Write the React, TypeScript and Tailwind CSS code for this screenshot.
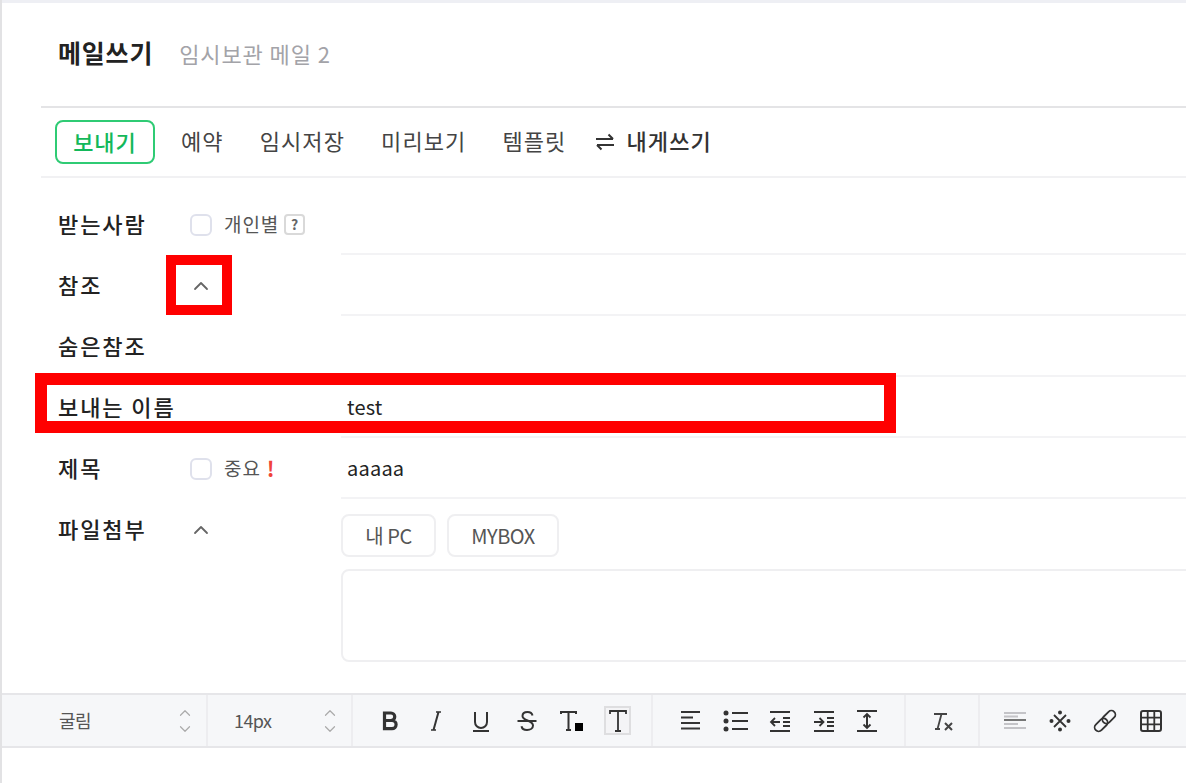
import type { ReactNode } from 'react'
import { ChevronUp, ChevronDown } from 'lucide-react'

const FONT = "font-['Noto_Sans_CJK_KR','Noto_Sans',sans-serif]"

function Row({ label, left, children }: { label: string; left?: ReactNode; children?: ReactNode }) {
    return (
        <div className="flex h-[61px]">
            <div className="w-[339px] flex items-center pl-[56px]">
                <span className="w-[132px] pb-[3px] text-[22px] font-medium text-[#222] tracking-[1.9px] whitespace-nowrap">{label}</span>
                {left}
            </div>
            <div className="flex-1 flex items-center border-b-2 border-[#f3f3f5] pl-[6px] text-[20px] text-[#222] tracking-[0.2px]">
                {children}
            </div>
        </div>
    )
}

function Check({ label }: { label: string }) {
    return (
        <span className="flex items-center gap-[12px]">
            <span className="w-[22px] h-[22px] rounded-[6px] border-2 border-[#dfe1ec] bg-white"></span>
            <span className="pb-[1px] text-[19px] text-[#555] tracking-[0.9px]">{label}</span>
        </span>
    )
}

function Ico({ children }: { children: ReactNode }) {
    return (
        <svg width="28" height="28" viewBox="0 0 28 28" fill="none" stroke="#333" strokeWidth="2">
            {children}
        </svg>
    )
}

function ToolBtn({ children, w }: { children: ReactNode; w: string }) {
    return <span className={`${w} flex items-center justify-center`}>{children}</span>
}

function Select({ label, className }: { label: string; className: string }) {
    return (
        <div className={`${className} flex items-center border-r-2 border-[#ededf0]`}>
            <span className="flex-1 text-[18px] text-[#555] tracking-[-0.6px]">{label}</span>
            <span className="flex flex-col items-center text-[#aaa]">
                <ChevronUp size={18} strokeWidth={1.6} className="-mb-[1px]" />
                <ChevronDown size={18} strokeWidth={1.6} className="-mt-[1px]" />
            </span>
        </div>
    )
}

export default function App() {
    return (
        <div className={`${FONT} relative h-[783px] w-full overflow-hidden bg-white border-l-2 border-[#e2e2e4]`}>
            <div className="h-[3px] bg-[#eeeff4]"></div>

            <div className="h-[103px] flex items-center pl-[56px] pb-[3px]">
                <h1 className="text-[25px] font-bold text-[#222] tracking-[0.8px]">메일쓰기</h1>
                <span className="ml-[26px] text-[22px] text-[#a3a3a8] tracking-[0.9px]">임시보관 메일 2</span>
            </div>

            <div className="ml-[39px] border-t-2 border-[#e4e4e6] border-b-2 border-b-[#f1f1f3] h-[72px] flex items-center pl-[14px]">
                <button className="w-[100px] h-[44px] rounded-[8px] border-2 border-[#2fcb74] pb-[2px] text-[22px] font-medium text-[#13b85a] tracking-[1px]">보내기</button>
                <div className="flex items-center pb-[3px] text-[22px] text-[#444] tracking-[1.1px]">
                    <span className="ml-[26px]">예약</span>
                    <span className="ml-[36px]">임시저장</span>
                    <span className="ml-[36px]">미리보기</span>
                    <span className="ml-[36px]">템플릿</span>
                </div>
                <span className="ml-[30px] flex items-center gap-[12px] text-[22px] font-medium text-[#333] tracking-[1.1px]">
                    <svg width="18" height="18" viewBox="0 0 18 18" fill="none" stroke="#333" strokeWidth="2">
                        <path d="M0 6h17M12.500 1.500 17 6M18 12H1M5.500 16.500 1 12" />
                    </svg>
                    <span className="pb-[3px]">내게쓰기</span>
                </span>
            </div>

            <div className="mt-[16px]">
                <Row
                    label="받는사람"
                    left={
                        <span className="flex items-center gap-[5px]">
                            <Check label="개인별" />
                            <span className="w-[21px] h-[21px] rounded-[4px] border-2 border-[#d9d9d9] text-[14px] font-bold text-[#666] flex items-center justify-center">?</span>
                        </span>
                    }
                />
                <Row label="참조" left={<ChevronUp size={24} strokeWidth={1.8} className="text-[#666] -ml-[1px]" />} />
                <Row label="숨은참조" />
                <Row label="보내는 이름">test</Row>
                <Row
                    label="제목"
                    left={
                        <span className="flex items-center gap-[6px]">
                            <Check label="중요" />
                            <span className="text-[21px] font-bold text-[#f0433a] leading-none">!</span>
                        </span>
                    }
                >
                    aaaaa
                </Row>
                <div className="flex h-[194px]">
                    <div className="w-[339px] flex items-start pl-[56px] pt-[13px]">
                        <span className="w-[132px] text-[22px] font-medium text-[#222] tracking-[1.9px]">파일첨부</span>
                        <ChevronUp size={24} strokeWidth={1.8} className="text-[#666] -ml-[1px] mt-[6px]" />
                    </div>
                    <div className="flex-1 pt-[15px]">
                        <div className="flex gap-[11px]">
                            <button className="w-[95px] h-[43px] rounded-[8px] border-2 border-[#efeff1] text-[20px] text-[#555] tracking-[-0.5px]">내 PC</button>
                            <button className="w-[112px] h-[43px] rounded-[8px] border-2 border-[#efeff1] text-[20px] text-[#555] tracking-[-0.5px]">MYBOX</button>
                        </div>
                        <div className="mt-[12px] h-[93px] -mr-[10px] rounded-[8px] border-2 border-[#efeff1]"></div>
                    </div>
                </div>
            </div>

            <div className="h-[55px] flex bg-[#f6f7f9] border-y-2 border-[#e6e6e9]">
                <Select label="굴림" className="w-[206px] pl-[57px] pr-[12px]" />
                <Select label="14px" className="w-[145px] pl-[26px] pr-[12px]" />

                <div className="w-[300px] flex items-center pl-[14px] border-r-2 border-[#ededf0]">
                    <ToolBtn w="w-[46px]">
                        <Ico>
                            <path strokeWidth="3.200" d="M8.500 6h6.500a3.700 3.700 0 0 1 0 7.500H8.500zM8.500 13.500h7.500a4.100 4.100 0 0 1 0 8.200H8.500z" />
                        </Ico>
                    </ToolBtn>
                    <ToolBtn w="w-[45px]">
                        <Ico><path d="M16.500 5 11.500 23" /><path strokeWidth="1.600" d="M14 5h5M9 23h5" /></Ico>
                    </ToolBtn>
                    <ToolBtn w="w-[46px]">
                        <Ico><path d="M8 5v10a6 6 0 0 0 12 0V5" /><path d="M6 24h16" /></Ico>
                    </ToolBtn>
                    <ToolBtn w="w-[46px]">
                        <Ico><path d="M19.500 8.500C19 6 17 5 14.500 5 11.500 5 9.500 6.500 9.500 9c0 5 10.500 4 10.500 9.500 0 2.700-2.500 4.500-6 4.500-3 0-5-1.300-5.500-3.800" /><path d="M4.500 14h19" /></Ico>
                    </ToolBtn>
                    <ToolBtn w="w-[46px]">
                        <Ico>
                            <path d="M2 7V5h15v2M9.500 5v18M7 23h5" />
                            <rect x="16" y="16" width="8" height="8" fill="#000" stroke="none" />
                        </Ico>
                    </ToolBtn>
                    <span className="ml-[8px] w-[27px] h-[29px] flex items-center justify-center border-2 border-[#dedee0] bg-[#f4f4f6]">
                        <svg width="20" height="24" viewBox="0 0 20 24" fill="none" stroke="#333" strokeWidth="1.800">
                            <path d="M2 5V2h16v3M10 2v20M7 22h6" />
                        </svg>
                    </span>
                </div>

                <div className="w-[253px] flex items-center pl-[15px] border-r-2 border-[#ededf0]">
                    <ToolBtn w="w-[45px]">
                        <Ico><path d="M4 5h19M4 10.500h12M4 16h19M4 21.500h19" /></Ico>
                    </ToolBtn>
                    <ToolBtn w="w-[45px]">
                        <Ico>
                            <path d="M10 6h16M10 14h16M10 22h16" />
                            <circle cx="4" cy="6" r="2.500" fill="#333" stroke="none" />
                            <circle cx="4" cy="14" r="2.500" fill="#333" stroke="none" />
                            <circle cx="4" cy="22" r="2.500" fill="#333" stroke="none" />
                        </Ico>
                    </ToolBtn>
                    <ToolBtn w="w-[44px]">
                        <Ico>
                            <path strokeWidth="1.800" d="M4 5h20M17 11h7M17 15h7M17 19h7M4 24h20M14 15H5M9 11l-4 4 4 4" />
                        </Ico>
                    </ToolBtn>
                    <ToolBtn w="w-[43px]">
                        <Ico>
                            <path strokeWidth="1.800" d="M4 5h20M17 11h7M17 15h7M17 19h7M4 24h20M4 15h9M9.500 11l4 4-4 4" />
                        </Ico>
                    </ToolBtn>
                    <ToolBtn w="w-[44px]">
                        <Ico>
                            <path d="M4 4h20M4 24h20M14 7v14" />
                            <path strokeWidth="1.800" d="m10.500 10.500 3.500-3.500 3.500 3.500M10.500 17.500 14 21l3.500-3.500" />
                        </Ico>
                    </ToolBtn>
                </div>

                <div className="w-[74px] flex items-center justify-center border-r-2 border-[#ededf0]">
                    <svg width="26" height="26" viewBox="0 0 26 26" fill="none" stroke="#444" strokeWidth="1.800">
                        <path d="M5 6h13M12.500 6 8.500 21M6 21h5" />
                        <path strokeWidth="2" d="m16 15 7 7M23 15l-7 7" />
                    </svg>
                </div>

                <div className="flex-1 flex items-center pl-[12px]">
                    <ToolBtn w="w-[45px]">
                        <svg width="28" height="28" viewBox="0 0 28 28" fill="none" stroke="#c4c4c8" strokeWidth="2">
                            <path stroke="#555" strokeWidth="1.600" d="M3 13h22" />
                            <path d="M3 6h22M3 9.500h14M3 17h14M3 21h22" />
                        </svg>
                    </ToolBtn>
                    <ToolBtn w="w-[45px]">
                        <Ico>
                            <path strokeWidth="1.800" d="m8 8 12 12M20 8 8 20" />
                            <circle cx="14" cy="5.500" r="2" fill="#333" stroke="none" />
                            <circle cx="14" cy="22.500" r="2" fill="#333" stroke="none" />
                            <circle cx="5.500" cy="14" r="2" fill="#333" stroke="none" />
                            <circle cx="22.500" cy="14" r="2" fill="#333" stroke="none" />
                        </Ico>
                    </ToolBtn>
                    <ToolBtn w="w-[46px]">
                        <svg width="28" height="28" viewBox="0 0 28 28" fill="none" stroke="#333" strokeWidth="1.800">
                            <g transform="rotate(-45 14 14)">
                                <rect x="1" y="10" width="15" height="8" rx="4" />
                                <rect x="12" y="10" width="15" height="8" rx="4" />
                            </g>
                        </svg>
                    </ToolBtn>
                    <ToolBtn w="w-[46px]">
                        <Ico>
                            <rect x="4" y="4" width="20" height="20" rx="2" />
                            <path strokeWidth="1.800" d="M10.700 4v20M17.300 4v20M4 10.700h20M4 17.300h20" />
                        </Ico>
                    </ToolBtn>
                </div>
            </div>

            {/* red annotation boxes drawn over the screenshot */}
            <div className="absolute left-[164px] top-[255px] w-[66px] h-[60px] border-[10px] border-[#ff0000]"></div>
            <div className="absolute left-[33px] top-[373px] w-[861px] h-[60px] border-[12px] border-[#ff0000]"></div>
        </div>
    )
}
